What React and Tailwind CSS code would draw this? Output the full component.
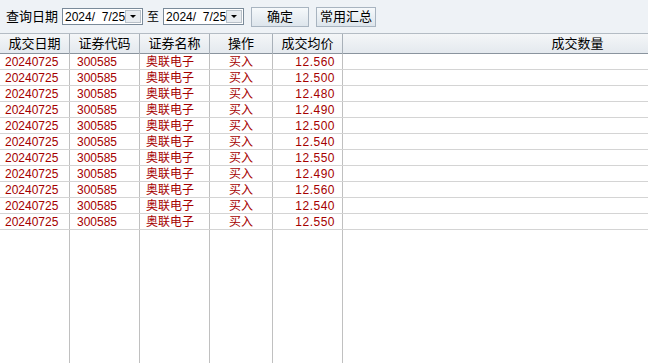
import React from 'react';

const rows = [
  '12.560', '12.500', '12.480', '12.490', '12.500', '12.540',
  '12.550', '12.490', '12.560', '12.540', '12.550',
];

const cols = 'grid grid-cols-[70px_70px_70px_63px_70px_1fr]';
const font = { fontFamily: '"Liberation Sans", "Noto Sans CJK SC", sans-serif' };

const DateBox = ({ value }) => (
  <div className="flex h-[17px] w-[81px] items-center border border-[#7a8a99] bg-white">
    <span className="flex-1 whitespace-pre pl-[2px] text-[12px] leading-none text-black">{value}</span>
    <div className="mr-[1px] flex h-[13px] w-[16px] items-center justify-center border border-[#b8c0c8] bg-[#e8ecf0]">
      <div className="h-0 w-0 border-x-[3px] border-t-[3px] border-x-transparent border-t-black" />
    </div>
  </div>
);

const Btn = ({ children, w }) => (
  <button className={`flex h-[20px] ${w} items-center justify-center border border-[#a8b4c0] bg-gradient-to-b from-[#f6f9fb] to-[#dde5ec] text-[13px] text-black`}>
    {children}
  </button>
);

export default function App() {
  return (
    <div className="flex h-[363px] w-[648px] flex-col overflow-hidden bg-white" style={font}>
      {/* Toolbar */}
      <div className="flex h-[33px] items-center bg-[#eef2f6] pl-[6px]">
        <span className="text-[13px] text-black">查询日期</span>
        <div className="ml-[4px]"><DateBox value="2024/  7/25" /></div>
        <span className="ml-[4px] text-[12px] text-black">至</span>
        <div className="ml-[4px]"><DateBox value="2024/  7/25" /></div>
        <div className="ml-[7px]"><Btn w="w-[58px]">确定</Btn></div>
        <div className="ml-[7px]"><Btn w="w-[60px]">常用汇总</Btn></div>
      </div>

      {/* Header */}
      <div className={`${cols} h-[21px] border-t border-b border-t-[#b4bcc4] border-b-[#8a949e] bg-gradient-to-b from-[#f4f6f8] to-[#e4e9ee] text-[13px] text-black`}>
        {['成交日期', '证券代码', '证券名称', '操作', '成交均价'].map((h) => (
          <div key={h} className="flex items-center justify-center border-r border-[#a8b0b8]">{h}</div>
        ))}
        <div className="flex items-center justify-center pl-[164px]">成交数量</div>
      </div>

      {/* Rows */}
      {rows.map((p, i) => (
        <div key={i} className={`${cols} h-[16px] border-b border-[#d4d4d4] text-[12px] leading-none text-[#a50000]`}>
          <div className="flex items-center border-r border-[#c0c0c0] pl-[5px]">20240725</div>
          <div className="flex items-center border-r border-[#c0c0c0] pl-[7px]">300585</div>
          <div className="flex items-center border-r border-[#c0c0c0] pl-[6px]">奥联电子</div>
          <div className="flex items-center justify-center border-r border-[#c0c0c0]">买入</div>
          <div className="flex items-center justify-end border-r border-[#c0c0c0] pr-[7px] tracking-[0.5px]">{p}</div>
          <div />
        </div>
      ))}

      {/* Filler */}
      <div className={`${cols} flex-1`}>
        <div className="border-r border-[#c0c0c0]" />
        <div className="border-r border-[#c0c0c0]" />
        <div className="border-r border-[#c0c0c0]" />
        <div className="border-r border-[#c0c0c0]" />
        <div className="border-r border-[#c0c0c0]" />
        <div />
      </div>
    </div>
  );
}
